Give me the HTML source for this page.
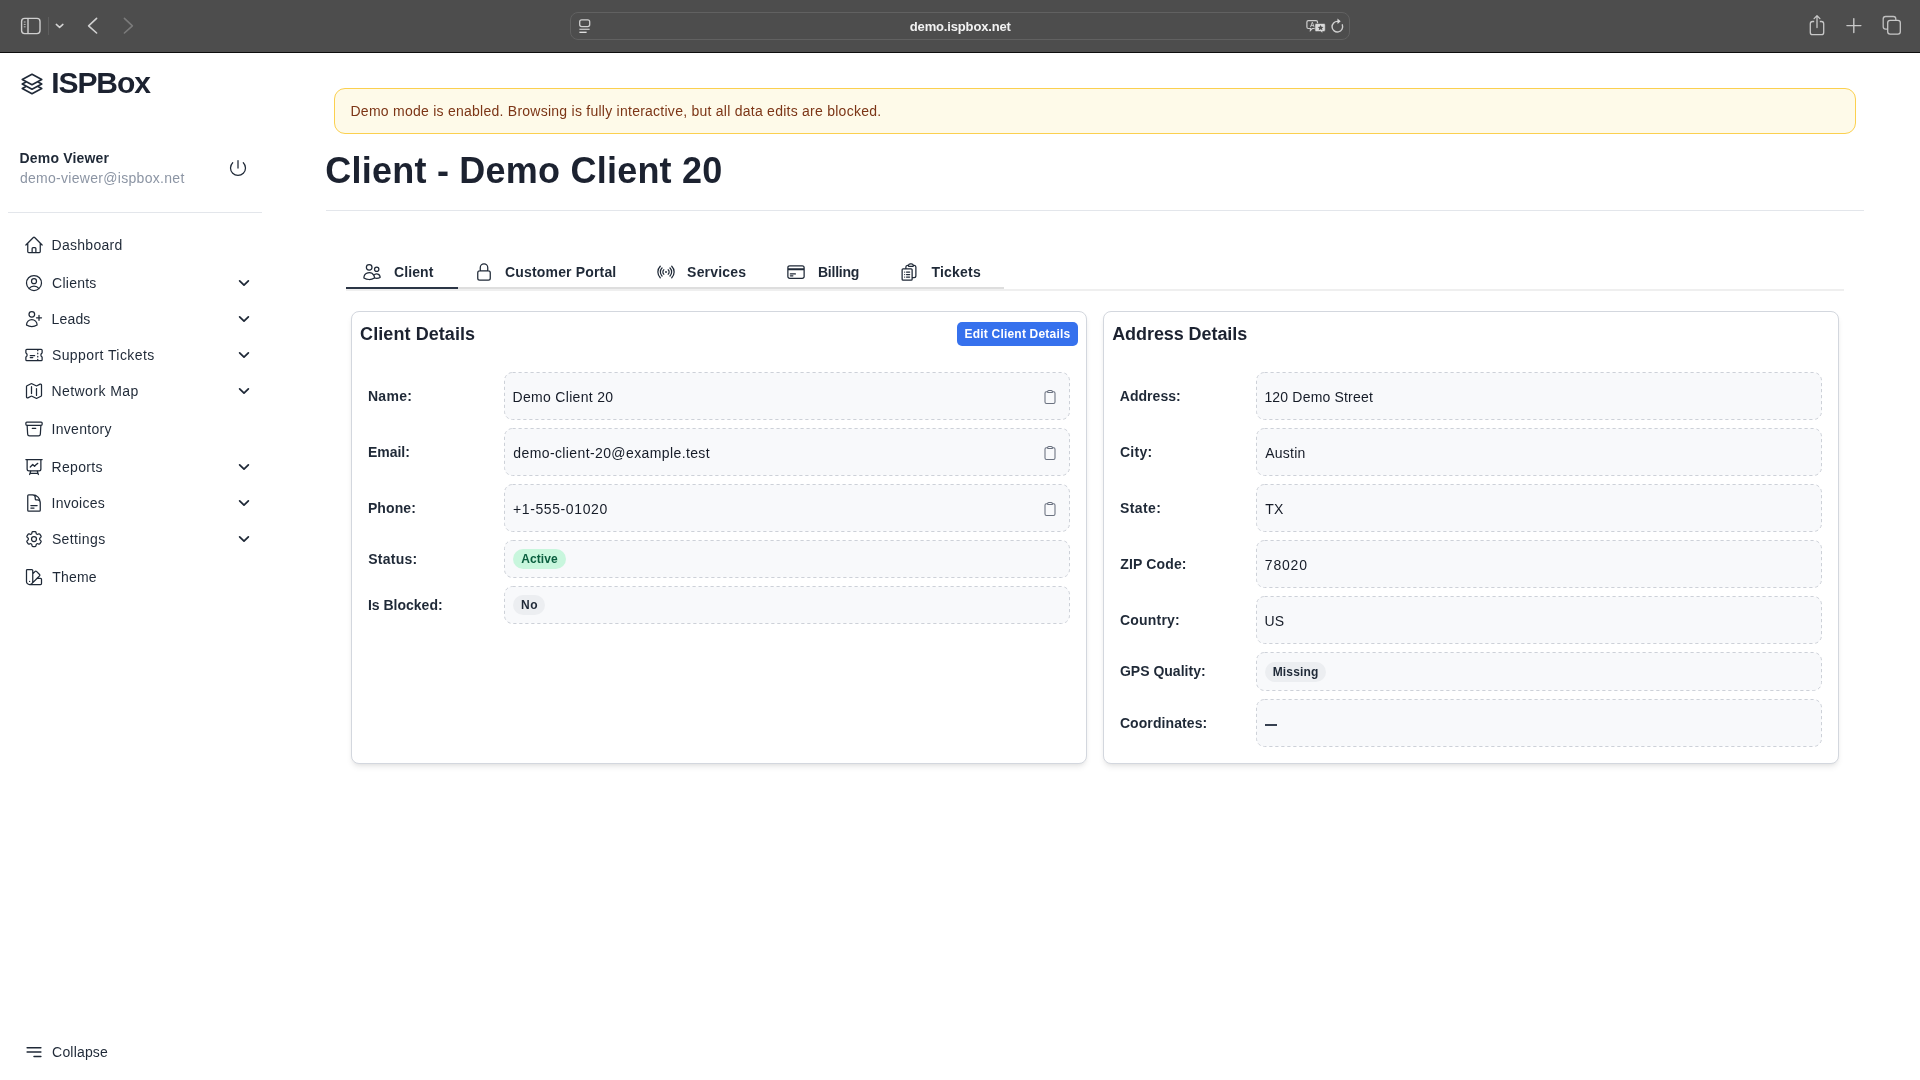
<!DOCTYPE html>
<html><head><meta charset="utf-8"><title>ISPBox - Client</title>
<style>
html,body{margin:0;padding:0;width:1920px;height:1080px;overflow:hidden;background:#fff;font-family:"Liberation Sans",sans-serif}
.t{position:absolute;white-space:nowrap}
.ic{position:absolute;overflow:visible}
.vb{position:absolute;border:1px dashed #cfd3da;border-radius:8px;background:#f8f9fb}
</style></head><body><div id="root" style="position:absolute;left:0;top:0;width:1920px;height:1080px;will-change:transform;background:#fff">
<div style="position:absolute;left:0;top:0;width:1920px;height:52px;background:#4d4d4d"></div>
<div style="position:absolute;left:0;top:52px;width:1920px;height:1px;background:#0d0d0d"></div>
<svg class="ic" style="left:0;top:0;width:160px;height:52px" viewBox="0 0 160 52" fill="none"><rect x="21.6" y="18.4" width="18.4" height="15.2" rx="3" stroke="#cfcfcf" stroke-width="1.4"/><line x1="28" y1="19" x2="28" y2="33" stroke="#cfcfcf" stroke-width="1.4"/><line x1="23.8" y1="22" x2="25.6" y2="22" stroke="#bdbdbd" stroke-width="1"/><line x1="23.8" y1="24.4" x2="25.6" y2="24.4" stroke="#bdbdbd" stroke-width="1"/><line x1="23.8" y1="26.8" x2="25.6" y2="26.8" stroke="#bdbdbd" stroke-width="1"/><line x1="48.5" y1="17" x2="48.5" y2="35" stroke="#5e5e5e" stroke-width="1"/><path d="M56.3 24.4 59.6 27.4 62.9 24.4" stroke="#d4d4d4" stroke-width="1.5" stroke-linecap="round" stroke-linejoin="round"/><path d="M96.6 18.4 88.6 25.8 96.6 33" stroke="#d0d0d0" stroke-width="1.6" stroke-linecap="round" stroke-linejoin="round"/><path d="M124.4 18.4 132.4 25.8 124.4 33" stroke="#7b7b7b" stroke-width="1.6" stroke-linecap="round" stroke-linejoin="round"/></svg>
<div style="position:absolute;left:570px;top:12px;width:778px;height:26px;border:1px solid #616161;border-radius:8px;background:#4d4d4d"></div>
<svg class="ic" style="left:570px;top:12px;width:30px;height:28px" viewBox="0 0 30 28" fill="none"><rect x="9.7" y="7.8" width="10" height="6.8" rx="2" stroke="#cfcfcf" stroke-width="1.3"/><line x1="9.4" y1="17.3" x2="19.6" y2="17.3" stroke="#c4c4c4" stroke-width="1.3"/><line x1="9.4" y1="20.3" x2="16.6" y2="20.3" stroke="#e6e6e6" stroke-width="1.3"/></svg>
<div class="t" id="t0" style="left:909.8px;top:20px;font-size:13px;line-height:13px;font-weight:700;color:#f2f2f2;letter-spacing:-0.157px">demo.ispbox.net</div>
<svg class="ic" style="left:1300px;top:12px;width:50px;height:28px" viewBox="0 0 50 28" fill="none"><path d="M8.4 8.6h7.6c.9 0 1.5.6 1.5 1.5v4.9c0 .9-.6 1.5-1.5 1.5h-3.8l-1.8 2v-2h-2c-.9 0-1.5-.6-1.5-1.5v-4.9c0-.9.6-1.5 1.5-1.5z" stroke="#cfcfcf" stroke-width="1.2"/><path d="M10.4 15.2l1.9-5 1.9 5M11 13.6h2.6" stroke="#cfcfcf" stroke-width="0.9"/><path d="M16.4 11.5h7.4c.9 0 1.5.6 1.5 1.5v5.1c0 .9-.6 1.5-1.5 1.5h-1.2v1.7l-1.8-1.7h-4.4c-.9 0-1.5-.6-1.5-1.5V13c0-.9.6-1.5 1.5-1.5z" fill="#dadada" stroke="#4d4d4d" stroke-width="0.6"/><path d="M20.6 12.9l.9 1.9 2 .2-1.5 1.3.5 2-1.9-1.1-1.9 1.1.5-2-1.5-1.3 2-.2z" fill="#4d4d4d"/><path d="M37.8 9.4a5.3 5.3 0 1 0 4.5 3.4" stroke="#cfcfcf" stroke-width="1.4" stroke-linecap="round"/><path d="M37.4 6.4l3.3 2.9-3.2 2.7z" fill="#d8d8d8"/></svg>
<svg class="ic" style="left:1800px;top:0;width:120px;height:52px" viewBox="0 0 120 52" fill="none"><path d="M14.2 21.5h-1.6c-1.3 0-2.3 1-2.3 2.3v8.6c0 1.3 1 2.3 2.3 2.3h8.8c1.3 0 2.3-1 2.3-2.3v-8.6c0-1.3-1-2.3-2.3-2.3h-1.6" stroke="#c8c8c8" stroke-width="1.3"/><path d="M17 27.6V15.8M14.1 18.6 17 15.6l2.9 3" stroke="#c8c8c8" stroke-width="1.3" stroke-linecap="round" stroke-linejoin="round"/><path d="M53.8 18.6v14M46.9 25.6h14" stroke="#c8c8c8" stroke-width="1.4" stroke-linecap="round"/><rect x="83.2" y="16.5" width="12.6" height="12.6" rx="2.4" stroke="#c0c0c0" stroke-width="1.3"/><rect x="87.7" y="20.4" width="12.6" height="13.8" rx="2.4" fill="#4d4d4d" stroke="#c8c8c8" stroke-width="1.3"/></svg>
<svg class="ic" style="left:20px;top:72px;width:24px;height:24px" viewBox="0 0 24 24" fill="none" stroke="#1f2937" stroke-width="1.6" stroke-linecap="round" stroke-linejoin="round"><path d="M6.429 9.75 2.25 12l4.179 2.25m0-4.5 5.571 3 5.571-3m-11.142 0L2.25 7.5 12 2.25l9.75 5.25-4.179 2.25m0 0L21.75 12l-4.179 2.25m0 0 4.179 2.25L12 21.75 2.25 16.5l4.179-2.25m11.142 0-5.571 3-5.571-3"/></svg>
<div class="t" id="t1" style="left:51.3px;top:68px;font-size:30px;line-height:30px;font-weight:700;color:#1c2230;letter-spacing:-1.100px">ISPBox</div>
<div class="t" id="t2" style="left:19.6px;top:151px;font-size:14px;line-height:14px;font-weight:700;color:#1f2937;letter-spacing:0.167px">Demo Viewer</div>
<div class="t" id="t3" style="left:19.9px;top:171px;font-size:14px;line-height:14px;font-weight:400;color:#8c95a4;letter-spacing:0.298px">demo-viewer@ispbox.net</div>
<svg class="ic" style="left:228px;top:158px;width:20px;height:20px" viewBox="0 0 24 24" fill="none" stroke="#1f2937" stroke-width="1.5" stroke-linecap="round" stroke-linejoin="round"><path d="M5.636 5.636a9 9 0 1 0 12.728 0M12 3v9"/></svg>
<div style="position:absolute;left:8px;top:212px;width:254px;height:1px;background:#e3e6eb"></div>
<svg class="ic" style="left:24px;top:235px;width:20px;height:20px" viewBox="0 0 24 24" fill="none" stroke="#1f2937" stroke-width="1.5" stroke-linecap="round" stroke-linejoin="round"><path d="m2.25 12 8.954-8.955c.44-.439 1.152-.439 1.591 0L21.75 12M4.5 9.75v10.125c0 .621.504 1.125 1.125 1.125H9.75v-4.875c0-.621.504-1.125 1.125-1.125h2.25c.621 0 1.125.504 1.125 1.125V21h4.125c.621 0 1.125-.504 1.125-1.125V9.75M8.25 21h8.25"/></svg>
<div class="t" id="t4" style="left:51.5px;top:238px;font-size:14px;line-height:14px;font-weight:400;color:#1f2937;letter-spacing:0.296px">Dashboard</div>
<svg class="ic" style="left:24px;top:273px;width:20px;height:20px" viewBox="0 0 24 24" fill="none" stroke="#1f2937" stroke-width="1.5" stroke-linecap="round" stroke-linejoin="round"><path d="M17.982 18.725A7.488 7.488 0 0 0 12 15.75a7.488 7.488 0 0 0-5.982 2.975m11.963 0a9 9 0 1 0-11.963 0m11.963 0A8.966 8.966 0 0 1 12 21a8.966 8.966 0 0 1-5.982-2.275M15 9.75a3 3 0 1 1-6 0 3 3 0 0 1 6 0Z"/></svg>
<div class="t" id="t5" style="left:52.1px;top:276px;font-size:14px;line-height:14px;font-weight:400;color:#1f2937;letter-spacing:0.245px">Clients</div>
<svg class="ic" style="left:236.9px;top:276px;width:14px;height:14px" viewBox="0 0 24 24" fill="none" stroke="#1f2937" stroke-width="3" stroke-linecap="round" stroke-linejoin="round"><path d="m19.5 8.25-7.5 7.5-7.5-7.5"/></svg>
<svg class="ic" style="left:24px;top:309px;width:20px;height:20px" viewBox="0 0 24 24" fill="none" stroke="#1f2937" stroke-width="1.5" stroke-linecap="round" stroke-linejoin="round"><path d="M18 7.5v3m0 0v3m0-3h3m-3 0h-3m-2.25-4.125a3.375 3.375 0 1 1-6.75 0 3.375 3.375 0 0 1 6.75 0ZM3 19.235v-.11a6.375 6.375 0 0 1 12.75 0v.109A12.318 12.318 0 0 1 9.374 21c-2.331 0-4.512-.645-6.374-1.766Z"/></svg>
<div class="t" id="t6" style="left:51.5px;top:312px;font-size:14px;line-height:14px;font-weight:400;color:#1f2937;letter-spacing:0.178px">Leads</div>
<svg class="ic" style="left:236.9px;top:312px;width:14px;height:14px" viewBox="0 0 24 24" fill="none" stroke="#1f2937" stroke-width="3" stroke-linecap="round" stroke-linejoin="round"><path d="m19.5 8.25-7.5 7.5-7.5-7.5"/></svg>
<svg class="ic" style="left:24px;top:345px;width:20px;height:20px" viewBox="0 0 24 24" fill="none" stroke="#1f2937" stroke-width="1.5" stroke-linecap="round" stroke-linejoin="round"><path d="M16.5 6v.75m0 3v.75m0 3v.75m0 3V18m-9-5.25h5.25M7.5 15h3M3.375 5.25c-.621 0-1.125.504-1.125 1.125v3.026a2.999 2.999 0 0 1 0 5.198v3.026c0 .621.504 1.125 1.125 1.125h17.25c.621 0 1.125-.504 1.125-1.125v-3.026a2.999 2.999 0 0 1 0-5.198V6.375c0-.621-.504-1.125-1.125-1.125H3.375Z"/></svg>
<div class="t" id="t7" style="left:51.9px;top:348px;font-size:14px;line-height:14px;font-weight:400;color:#1f2937;letter-spacing:0.418px">Support Tickets</div>
<svg class="ic" style="left:236.9px;top:348px;width:14px;height:14px" viewBox="0 0 24 24" fill="none" stroke="#1f2937" stroke-width="3" stroke-linecap="round" stroke-linejoin="round"><path d="m19.5 8.25-7.5 7.5-7.5-7.5"/></svg>
<svg class="ic" style="left:24px;top:381px;width:20px;height:20px" viewBox="0 0 24 24" fill="none" stroke="#1f2937" stroke-width="1.5" stroke-linecap="round" stroke-linejoin="round"><path d="M9 6.75V15m6-6v8.25m.503 3.498 4.875-2.437c.381-.19.622-.58.622-1.006V4.82c0-.836-.88-1.38-1.628-1.006l-3.869 1.934c-.317.159-.69.159-1.006 0L9.503 3.252a1.125 1.125 0 0 0-1.006 0L3.622 5.689C3.24 5.88 3 6.27 3 6.695V19.18c0 .836.88 1.38 1.628 1.006l3.869-1.934c.317-.159.69-.159 1.006 0l4.994 2.497c.317.158.69.158 1.006 0Z"/></svg>
<div class="t" id="t8" style="left:51.5px;top:384px;font-size:14px;line-height:14px;font-weight:400;color:#1f2937;letter-spacing:0.428px">Network Map</div>
<svg class="ic" style="left:236.9px;top:384px;width:14px;height:14px" viewBox="0 0 24 24" fill="none" stroke="#1f2937" stroke-width="3" stroke-linecap="round" stroke-linejoin="round"><path d="m19.5 8.25-7.5 7.5-7.5-7.5"/></svg>
<svg class="ic" style="left:24px;top:419px;width:20px;height:20px" viewBox="0 0 24 24" fill="none" stroke="#1f2937" stroke-width="1.5" stroke-linecap="round" stroke-linejoin="round"><path d="m20.25 7.5-.625 10.632a2.25 2.25 0 0 1-2.247 2.118H6.622a2.25 2.25 0 0 1-2.247-2.118L3.75 7.5M10 11.25h4M3.375 7.5h17.25c.621 0 1.125-.504 1.125-1.125v-1.5c0-.621-.504-1.125-1.125-1.125H3.375c-.621 0-1.125.504-1.125 1.125v1.5c0 .621.504 1.125 1.125 1.125Z"/></svg>
<div class="t" id="t9" style="left:51.5px;top:422px;font-size:14px;line-height:14px;font-weight:400;color:#1f2937;letter-spacing:0.294px">Inventory</div>
<svg class="ic" style="left:24px;top:457px;width:20px;height:20px" viewBox="0 0 24 24" fill="none" stroke="#1f2937" stroke-width="1.5" stroke-linecap="round" stroke-linejoin="round"><path d="M3.75 3v11.25A2.25 2.25 0 0 0 6 16.5h2.25M3.75 3h-1.5m1.5 0h16.5m0 0h1.5m-1.5 0v11.25A2.25 2.25 0 0 1 18 16.5h-2.25m-7.5 0h7.5m-7.5 0-1 3m8.5-3 1 3m0 0 .5 1.5m-.5-1.5h-9.5m0 0-.5 1.5m.75-9 3-3 2.148 2.148A12.061 12.061 0 0 1 16.5 7.605"/></svg>
<div class="t" id="t10" style="left:51.5px;top:460px;font-size:14px;line-height:14px;font-weight:400;color:#1f2937;letter-spacing:0.323px">Reports</div>
<svg class="ic" style="left:236.9px;top:460px;width:14px;height:14px" viewBox="0 0 24 24" fill="none" stroke="#1f2937" stroke-width="3" stroke-linecap="round" stroke-linejoin="round"><path d="m19.5 8.25-7.5 7.5-7.5-7.5"/></svg>
<svg class="ic" style="left:24px;top:493px;width:20px;height:20px" viewBox="0 0 24 24" fill="none" stroke="#1f2937" stroke-width="1.5" stroke-linecap="round" stroke-linejoin="round"><path d="M19.5 14.25v-2.625a3.375 3.375 0 0 0-3.375-3.375h-1.5A1.125 1.125 0 0 1 13.5 7.125v-1.5a3.375 3.375 0 0 0-3.375-3.375H8.25m0 12.75h7.5m-7.5 3H12M10.5 2.25H5.625c-.621 0-1.125.504-1.125 1.125v17.25c0 .621.504 1.125 1.125 1.125h12.75c.621 0 1.125-.504 1.125-1.125V11.25a9 9 0 0 0-9-9Z"/></svg>
<div class="t" id="t11" style="left:51.5px;top:496px;font-size:14px;line-height:14px;font-weight:400;color:#1f2937;letter-spacing:0.265px">Invoices</div>
<svg class="ic" style="left:236.9px;top:496px;width:14px;height:14px" viewBox="0 0 24 24" fill="none" stroke="#1f2937" stroke-width="3" stroke-linecap="round" stroke-linejoin="round"><path d="m19.5 8.25-7.5 7.5-7.5-7.5"/></svg>
<svg class="ic" style="left:24px;top:529px;width:20px;height:20px" viewBox="0 0 24 24" fill="none" stroke="#1f2937" stroke-width="1.5" stroke-linecap="round" stroke-linejoin="round"><path d="M9.594 3.94c.09-.542.56-.94 1.11-.94h2.593c.55 0 1.02.398 1.11.94l.213 1.281c.063.374.313.686.645.87.074.04.147.083.22.127.325.196.72.257 1.075.124l1.217-.456a1.125 1.125 0 0 1 1.37.49l1.296 2.247a1.125 1.125 0 0 1-.26 1.431l-1.003.827c-.293.241-.438.613-.43.992a7.723 7.723 0 0 1 0 .255c-.008.378.137.75.43.991l1.004.827c.424.35.534.955.26 1.43l-1.298 2.247a1.125 1.125 0 0 1-1.369.491l-1.217-.456c-.355-.133-.75-.072-1.076.124a6.47 6.47 0 0 1-.22.128c-.331.183-.581.495-.644.869l-.213 1.281c-.09.543-.56.94-1.11.94h-2.594c-.55 0-1.019-.398-1.11-.94l-.213-1.281c-.062-.374-.312-.686-.644-.87a6.52 6.52 0 0 1-.22-.127c-.325-.196-.72-.257-1.076-.124l-1.217.456a1.125 1.125 0 0 1-1.369-.49l-1.297-2.247a1.125 1.125 0 0 1 .26-1.431l1.004-.827c.292-.24.437-.613.43-.991a6.932 6.932 0 0 1 0-.255c.007-.38-.138-.751-.43-.992l-1.004-.827a1.125 1.125 0 0 1-.26-1.43l1.297-2.247a1.125 1.125 0 0 1 1.37-.491l1.216.456c.356.133.751.072 1.076-.124.072-.044.146-.086.22-.128.332-.183.582-.495.644-.869l.214-1.28ZM15 12a3 3 0 1 1-6 0 3 3 0 0 1 6 0Z"/></svg>
<div class="t" id="t12" style="left:51.9px;top:532px;font-size:14px;line-height:14px;font-weight:400;color:#1f2937;letter-spacing:0.382px">Settings</div>
<svg class="ic" style="left:236.9px;top:532px;width:14px;height:14px" viewBox="0 0 24 24" fill="none" stroke="#1f2937" stroke-width="3" stroke-linecap="round" stroke-linejoin="round"><path d="m19.5 8.25-7.5 7.5-7.5-7.5"/></svg>
<svg class="ic" style="left:24px;top:567px;width:20px;height:20px" viewBox="0 0 24 24" fill="none" stroke="#1f2937" stroke-width="1.5" stroke-linecap="round" stroke-linejoin="round"><path d="M4.098 19.902a3.75 3.75 0 0 0 5.304 0l6.401-6.402M6.75 21A3.75 3.75 0 0 1 3 17.25V4.125C3 3.504 3.504 3 4.125 3h5.25c.621 0 1.125.504 1.125 1.125v4.072M6.75 21a3.75 3.75 0 0 0 3.75-3.75V8.197M6.75 21h13.125c.621 0 1.125-.504 1.125-1.125v-5.25c0-.621-.504-1.125-1.125-1.125h-4.072M10.5 8.197l2.88-2.88c.438-.439 1.15-.439 1.59 0l3.712 3.713c.44.44.44 1.152 0 1.59l-2.879 2.88M6.75 17.25h.008v.008H6.75v-.008Z"/></svg>
<div class="t" id="t13" style="left:52.3px;top:570px;font-size:14px;line-height:14px;font-weight:400;color:#1f2937;letter-spacing:0.185px">Theme</div>
<svg class="ic" style="left:23.6px;top:1042px;width:20px;height:20px" viewBox="0 0 24 24" fill="none" stroke="#1f2937" stroke-width="1.8" stroke-linecap="round" stroke-linejoin="round"><path d="M3.75 6.75h16.5M3.75 12h16.5M12 17.25h8.25"/></svg>
<div class="t" id="t14" style="left:52.1px;top:1045px;font-size:14px;line-height:14px;font-weight:400;color:#1f2937;letter-spacing:0.181px">Collapse</div>
<div style="position:absolute;left:334px;top:88px;width:1520px;height:44px;border:1px solid #fbd04f;border-radius:11px;background:#fefae9"></div>
<div class="t" id="t15" style="left:350.5px;top:104px;font-size:14px;line-height:14px;font-weight:400;color:#7c3516;letter-spacing:0.252px">Demo mode is enabled. Browsing is fully interactive, but all data edits are blocked.</div>
<div class="t" id="t16" style="left:325.3px;top:153px;font-size:36px;line-height:36px;font-weight:700;color:#1c2230;letter-spacing:0.225px">Client - Demo Client 20</div>
<div style="position:absolute;left:326px;top:210px;width:1538px;height:1px;background:#e3e6eb"></div>
<div style="position:absolute;left:346px;top:289px;width:1498px;height:2px;background:#efefef"></div>
<div style="position:absolute;left:458px;top:287px;width:546px;height:2px;background:#dedede"></div>
<div style="position:absolute;left:346px;top:287px;width:112px;height:2px;background:#2b3545"></div>
<svg class="ic" style="left:362px;top:262px;width:20px;height:20px" viewBox="0 0 24 24" fill="none" stroke="#1f2937" stroke-width="1.5" stroke-linecap="round" stroke-linejoin="round"><path d="M15 19.128a9.38 9.38 0 0 0 2.625.372 9.337 9.337 0 0 0 4.121-.952 4.125 4.125 0 0 0-7.533-2.493M15 19.128v-.003c0-1.113-.285-2.16-.786-3.07M15 19.128v.106A12.318 12.318 0 0 1 8.624 21c-2.331 0-4.512-.645-6.374-1.766l-.001-.109a6.375 6.375 0 0 1 11.964-3.07M12 6.375a3.375 3.375 0 1 1-6.75 0 3.375 3.375 0 0 1 6.75 0Zm8.25 2.25a2.625 2.625 0 1 1-5.25 0 2.625 2.625 0 0 1 5.25 0Z"/></svg>
<div class="t" id="t17" style="left:394.1px;top:265px;font-size:14px;line-height:14px;font-weight:700;color:#1f2937;letter-spacing:0.078px">Client</div>
<svg class="ic" style="left:474px;top:262px;width:20px;height:20px" viewBox="0 0 24 24" fill="none" stroke="#1f2937" stroke-width="1.5" stroke-linecap="round" stroke-linejoin="round"><path d="M16.5 10.5V6.75a4.5 4.5 0 1 0-9 0v3.75m-.75 11.25h10.5a2.25 2.25 0 0 0 2.25-2.25v-6.75a2.25 2.25 0 0 0-2.25-2.25H6.75a2.25 2.25 0 0 0-2.25 2.25v6.75a2.25 2.25 0 0 0 2.25 2.25Z"/></svg>
<div class="t" id="t18" style="left:505.1px;top:265px;font-size:14px;line-height:14px;font-weight:700;color:#1f2937;letter-spacing:0.158px">Customer Portal</div>
<svg class="ic" style="left:656px;top:262px;width:20px;height:20px" viewBox="0 0 24 24" fill="none" stroke="#1f2937" stroke-width="1.5" stroke-linecap="round" stroke-linejoin="round"><path d="M9.348 14.652a3.75 3.75 0 0 1 0-5.304m5.304 0a3.75 3.75 0 0 1 0 5.304m-7.425 2.121a6.75 6.75 0 0 1 0-9.546m9.546 0a6.75 6.75 0 0 1 0 9.546M5.106 18.894c-3.808-3.807-3.808-9.98 0-13.788m13.788 0c3.808 3.807 3.808 9.98 0 13.788M12 12h.008v.008H12V12Zm.375 0a.375.375 0 1 1-.75 0 .375.375 0 0 1 .75 0Z"/></svg>
<div class="t" id="t19" style="left:687.1px;top:265px;font-size:14px;line-height:14px;font-weight:700;color:#1f2937;letter-spacing:0.201px">Services</div>
<svg class="ic" style="left:786px;top:262px;width:20px;height:20px" viewBox="0 0 24 24" fill="none" stroke="#1f2937" stroke-width="1.5" stroke-linecap="round" stroke-linejoin="round"><path d="M2.25 8.25h19.5M2.25 9h19.5m-16.5 5.25h6m-6 2.25h3m-3.75 3h15a2.25 2.25 0 0 0 2.25-2.25V6.75A2.25 2.25 0 0 0 19.5 4.5h-15a2.25 2.25 0 0 0-2.25 2.25v10.5A2.25 2.25 0 0 0 4.5 19.5Z"/></svg>
<div class="t" id="t20" style="left:817.9px;top:265px;font-size:14px;line-height:14px;font-weight:700;color:#1f2937;letter-spacing:-0.216px">Billing</div>
<svg class="ic" style="left:899px;top:262px;width:20px;height:20px" viewBox="0 0 24 24" fill="none" stroke="#1f2937" stroke-width="1.5" stroke-linecap="round" stroke-linejoin="round"><path d="M9 12h3.75M9 15h3.75M9 18h3.75m3 .75H18a2.25 2.25 0 0 0 2.25-2.25V6.108c0-1.135-.845-2.098-1.976-2.192a48.424 48.424 0 0 0-1.123-.08m-5.801 0c-.065.21-.1.433-.1.664 0 .414.336.75.75.75h4.5a.75.75 0 0 0 .75-.75 2.25 2.25 0 0 0-.1-.664m-5.8 0A2.251 2.251 0 0 1 13.5 2.25H15c1.012 0 1.867.668 2.15 1.586m-5.8 0c-.376.023-.75.05-1.124.08C9.095 4.01 8.25 4.973 8.25 6.108V8.25m0 0H4.875c-.621 0-1.125.504-1.125 1.125v11.25c0 .621.504 1.125 1.125 1.125h9.75c.621 0 1.125-.504 1.125-1.125V9.375c0-.621-.504-1.125-1.125-1.125H8.25ZM6.75 12h.008v.008H6.75V12Zm0 3h.008v.008H6.75V15Zm0 3h.008v.008H6.75V18Z"/></svg>
<div class="t" id="t21" style="left:931.4px;top:265px;font-size:14px;line-height:14px;font-weight:700;color:#1f2937;letter-spacing:0.229px">Tickets</div>
<div style="position:absolute;left:351px;top:311px;width:734px;height:451px;border:1px solid #d3d7de;border-radius:8px;background:#fff;box-shadow:0 4px 6px -1px rgba(0,0,0,.08),0 2px 4px -2px rgba(0,0,0,.08)"></div>
<div style="position:absolute;left:1103px;top:311px;width:734px;height:451px;border:1px solid #d3d7de;border-radius:8px;background:#fff;box-shadow:0 4px 6px -1px rgba(0,0,0,.08),0 2px 4px -2px rgba(0,0,0,.08)"></div>
<div class="t" id="t22" style="left:360.1px;top:325px;font-size:18px;line-height:18px;font-weight:700;color:#1c2230;letter-spacing:0.077px">Client Details</div>
<div class="t" id="t23" style="left:1112.2px;top:325px;font-size:18px;line-height:18px;font-weight:700;color:#1c2230;letter-spacing:-0.076px">Address Details</div>
<div style="position:absolute;left:957px;top:322px;width:121px;height:24px;border-radius:5px;background:#3671ed"></div>
<div class="t" id="t24" style="left:964.6px;top:328px;font-size:12px;line-height:12px;font-weight:700;color:#ffffff;letter-spacing:0.196px">Edit Client Details</div>
<svg class="ic" style="left:504px;top:372px;width:566px;height:48px" viewBox="0 0 566 48"><rect x="0.5" y="0.5" width="565" height="47" rx="8" fill="#f8f9fb" stroke="#cdd1d8" stroke-width="1" stroke-dasharray="3.2 2.8"/></svg>
<div class="t" id="t25" style="left:367.9px;top:389px;font-size:14px;line-height:14px;font-weight:700;color:#1f2937;letter-spacing:0.312px">Name:</div>
<div class="t" id="t26" style="left:512.5px;top:390px;font-size:14px;line-height:14px;font-weight:400;color:#161c28;letter-spacing:0.315px">Demo Client 20</div>
<svg class="ic" style="left:1042px;top:389px;width:16px;height:16px" viewBox="0 0 24 24" fill="none" stroke="#6b7280" stroke-width="1.6" stroke-linecap="round" stroke-linejoin="round"><path d="M15.666 3.888A2.25 2.25 0 0 0 13.5 2.25h-3c-1.03 0-1.9.693-2.166 1.638m7.332 0c.055.194.084.4.084.612v0a.75.75 0 0 1-.75.75H9a.75.75 0 0 1-.75-.75v0c0-.212.03-.418.084-.612m7.332 0c.646.049 1.288.11 1.927.184 1.1.128 1.907 1.077 1.907 2.185V19.5a2.25 2.25 0 0 1-2.25 2.25H6.75A2.25 2.25 0 0 1 4.5 19.5V6.257c0-1.108.806-2.057 1.907-2.185a48.208 48.208 0 0 1 1.927-.184"/></svg>
<svg class="ic" style="left:504px;top:428px;width:566px;height:48px" viewBox="0 0 566 48"><rect x="0.5" y="0.5" width="565" height="47" rx="8" fill="#f8f9fb" stroke="#cdd1d8" stroke-width="1" stroke-dasharray="3.2 2.8"/></svg>
<div class="t" id="t27" style="left:367.9px;top:445px;font-size:14px;line-height:14px;font-weight:700;color:#1f2937;letter-spacing:-0.011px">Email:</div>
<div class="t" id="t28" style="left:513.3px;top:446px;font-size:14px;line-height:14px;font-weight:400;color:#161c28;letter-spacing:0.391px">demo-client-20@example.test</div>
<svg class="ic" style="left:1042px;top:445px;width:16px;height:16px" viewBox="0 0 24 24" fill="none" stroke="#6b7280" stroke-width="1.6" stroke-linecap="round" stroke-linejoin="round"><path d="M15.666 3.888A2.25 2.25 0 0 0 13.5 2.25h-3c-1.03 0-1.9.693-2.166 1.638m7.332 0c.055.194.084.4.084.612v0a.75.75 0 0 1-.75.75H9a.75.75 0 0 1-.75-.75v0c0-.212.03-.418.084-.612m7.332 0c.646.049 1.288.11 1.927.184 1.1.128 1.907 1.077 1.907 2.185V19.5a2.25 2.25 0 0 1-2.25 2.25H6.75A2.25 2.25 0 0 1 4.5 19.5V6.257c0-1.108.806-2.057 1.907-2.185a48.208 48.208 0 0 1 1.927-.184"/></svg>
<svg class="ic" style="left:504px;top:484px;width:566px;height:48px" viewBox="0 0 566 48"><rect x="0.5" y="0.5" width="565" height="47" rx="8" fill="#f8f9fb" stroke="#cdd1d8" stroke-width="1" stroke-dasharray="3.2 2.8"/></svg>
<div class="t" id="t29" style="left:367.9px;top:501px;font-size:14px;line-height:14px;font-weight:700;color:#1f2937;letter-spacing:0.105px">Phone:</div>
<div class="t" id="t30" style="left:513.0px;top:502px;font-size:14px;line-height:14px;font-weight:400;color:#161c28;letter-spacing:0.601px">+1-555-01020</div>
<svg class="ic" style="left:1042px;top:501px;width:16px;height:16px" viewBox="0 0 24 24" fill="none" stroke="#6b7280" stroke-width="1.6" stroke-linecap="round" stroke-linejoin="round"><path d="M15.666 3.888A2.25 2.25 0 0 0 13.5 2.25h-3c-1.03 0-1.9.693-2.166 1.638m7.332 0c.055.194.084.4.084.612v0a.75.75 0 0 1-.75.75H9a.75.75 0 0 1-.75-.75v0c0-.212.03-.418.084-.612m7.332 0c.646.049 1.288.11 1.927.184 1.1.128 1.907 1.077 1.907 2.185V19.5a2.25 2.25 0 0 1-2.25 2.25H6.75A2.25 2.25 0 0 1 4.5 19.5V6.257c0-1.108.806-2.057 1.907-2.185a48.208 48.208 0 0 1 1.927-.184"/></svg>
<svg class="ic" style="left:504px;top:540px;width:566px;height:38px" viewBox="0 0 566 38"><rect x="0.5" y="0.5" width="565" height="37" rx="8" fill="#f8f9fb" stroke="#cdd1d8" stroke-width="1" stroke-dasharray="3.2 2.8"/></svg>
<div class="t" id="t31" style="left:368.2px;top:552px;font-size:14px;line-height:14px;font-weight:700;color:#1f2937;letter-spacing:0.261px">Status:</div>
<div style="position:absolute;left:513px;top:549px;width:53px;height:20px;border-radius:10.0px;background:#c8f6dd"></div>
<div class="t" id="t32" style="left:521.2px;top:553px;font-size:12px;line-height:12px;font-weight:700;color:#0a5e3f;letter-spacing:0.104px">Active</div>
<svg class="ic" style="left:504px;top:586px;width:566px;height:38px" viewBox="0 0 566 38"><rect x="0.5" y="0.5" width="565" height="37" rx="8" fill="#f8f9fb" stroke="#cdd1d8" stroke-width="1" stroke-dasharray="3.2 2.8"/></svg>
<div class="t" id="t33" style="left:367.9px;top:598px;font-size:14px;line-height:14px;font-weight:700;color:#1f2937;letter-spacing:0.003px">Is Blocked:</div>
<div style="position:absolute;left:513px;top:595px;width:32px;height:20px;border-radius:10.0px;background:#eceef1"></div>
<div class="t" id="t34" style="left:521.0px;top:599px;font-size:12px;line-height:12px;font-weight:700;color:#1f2937;letter-spacing:0.554px">No</div>
<svg class="ic" style="left:1256px;top:372px;width:566px;height:48px" viewBox="0 0 566 48"><rect x="0.5" y="0.5" width="565" height="47" rx="8" fill="#f8f9fb" stroke="#cdd1d8" stroke-width="1" stroke-dasharray="3.2 2.8"/></svg>
<div class="t" id="t35" style="left:1119.8px;top:389px;font-size:14px;line-height:14px;font-weight:700;color:#1f2937;letter-spacing:0.027px">Address:</div>
<div class="t" id="t36" style="left:1264.4px;top:390px;font-size:14px;line-height:14px;font-weight:400;color:#161c28;letter-spacing:0.182px">120 Demo Street</div>
<svg class="ic" style="left:1256px;top:428px;width:566px;height:48px" viewBox="0 0 566 48"><rect x="0.5" y="0.5" width="565" height="47" rx="8" fill="#f8f9fb" stroke="#cdd1d8" stroke-width="1" stroke-dasharray="3.2 2.8"/></svg>
<div class="t" id="t37" style="left:1119.9px;top:445px;font-size:14px;line-height:14px;font-weight:700;color:#1f2937;letter-spacing:0.318px">City:</div>
<div class="t" id="t38" style="left:1265.3px;top:446px;font-size:14px;line-height:14px;font-weight:400;color:#161c28;letter-spacing:0.223px">Austin</div>
<svg class="ic" style="left:1256px;top:484px;width:566px;height:48px" viewBox="0 0 566 48"><rect x="0.5" y="0.5" width="565" height="47" rx="8" fill="#f8f9fb" stroke="#cdd1d8" stroke-width="1" stroke-dasharray="3.2 2.8"/></svg>
<div class="t" id="t39" style="left:1119.9px;top:501px;font-size:14px;line-height:14px;font-weight:700;color:#1f2937;letter-spacing:0.423px">State:</div>
<div class="t" id="t40" style="left:1265.2px;top:502px;font-size:14px;line-height:14px;font-weight:400;color:#161c28;letter-spacing:0.215px">TX</div>
<svg class="ic" style="left:1256px;top:540px;width:566px;height:48px" viewBox="0 0 566 48"><rect x="0.5" y="0.5" width="565" height="47" rx="8" fill="#f8f9fb" stroke="#cdd1d8" stroke-width="1" stroke-dasharray="3.2 2.8"/></svg>
<div class="t" id="t41" style="left:1120.3px;top:557px;font-size:14px;line-height:14px;font-weight:700;color:#1f2937;letter-spacing:0.142px">ZIP Code:</div>
<div class="t" id="t42" style="left:1264.8px;top:558px;font-size:14px;line-height:14px;font-weight:400;color:#161c28;letter-spacing:0.817px">78020</div>
<svg class="ic" style="left:1256px;top:596px;width:566px;height:48px" viewBox="0 0 566 48"><rect x="0.5" y="0.5" width="565" height="47" rx="8" fill="#f8f9fb" stroke="#cdd1d8" stroke-width="1" stroke-dasharray="3.2 2.8"/></svg>
<div class="t" id="t43" style="left:1119.9px;top:613px;font-size:14px;line-height:14px;font-weight:700;color:#1f2937;letter-spacing:0.214px">Country:</div>
<div class="t" id="t44" style="left:1264.5px;top:614px;font-size:14px;line-height:14px;font-weight:400;color:#161c28;letter-spacing:0.247px">US</div>
<svg class="ic" style="left:1256px;top:652px;width:566px;height:39px" viewBox="0 0 566 39"><rect x="0.5" y="0.5" width="565" height="38" rx="8" fill="#f8f9fb" stroke="#cdd1d8" stroke-width="1" stroke-dasharray="3.2 2.8"/></svg>
<div class="t" id="t45" style="left:1119.9px;top:664px;font-size:14px;line-height:14px;font-weight:700;color:#1f2937;letter-spacing:0.014px">GPS Quality:</div>
<div style="position:absolute;left:1265px;top:662px;width:61px;height:20px;border-radius:10.0px;background:#eceef1"></div>
<div class="t" id="t46" style="left:1272.7px;top:666px;font-size:12px;line-height:12px;font-weight:700;color:#1f2937;letter-spacing:0.159px">Missing</div>
<svg class="ic" style="left:1256px;top:699px;width:566px;height:48px" viewBox="0 0 566 48"><rect x="0.5" y="0.5" width="565" height="47" rx="8" fill="#f8f9fb" stroke="#cdd1d8" stroke-width="1" stroke-dasharray="3.2 2.8"/></svg>
<div class="t" id="t47" style="left:1119.9px;top:716px;font-size:14px;line-height:14px;font-weight:700;color:#1f2937;letter-spacing:0.089px">Coordinates:</div>
<div style="position:absolute;left:1265px;top:724px;width:12px;height:1.6px;background:#374151"></div>
</div></body></html>
